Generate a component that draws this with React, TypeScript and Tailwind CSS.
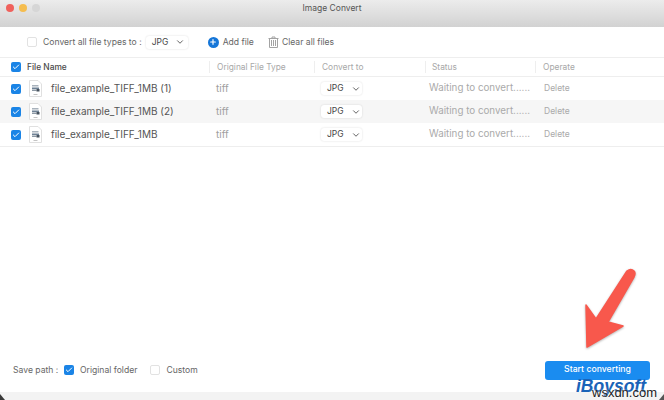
import { ChevronDown, Check, Plus } from 'lucide-react'

const FONT = "font-['Inter','Noto_Sans',sans-serif]"

const FILES = ['file_example_TIFF_1MB (1)', 'file_example_TIFF_1MB (2)', 'file_example_TIFF_1MB']

const CheckBox = ({ checked = false }: { checked?: boolean }) =>
  checked ? (
    <span className="flex h-[10px] w-[10px] shrink-0 items-center justify-center rounded-[2px] bg-[#1a84e6]">
      <Check className="h-[8px] w-[8px] text-white" strokeWidth={3} />
    </span>
  ) : (
    <span className="block h-[10px] w-[10px] shrink-0 rounded-[2px] border border-[#e2e2e2] bg-white" />
  )

const FileIcon = () => (
  <svg width="13" height="17" viewBox="0 0 13 17" className="shrink-0">
    <path d="M.5.5h8.5l3.500 3.500v12.500H.5z" fill="#fff" stroke="#e0e0e0" />
    <rect x="3" y="5" width="6.500" height="1.500" fill="#a8b2bc" />
    <rect x="3" y="7.500" width="7" height="1.500" fill="#6f8295" />
    <rect x="3" y="9.500" width="4.500" height="1.500" fill="#8d99a5" />
    <rect x="7.500" y="9" width="3" height="2.500" fill="#46525e" />
    <rect x="4.500" y="14" width="4" height="1" fill="#c4c4c4" />
  </svg>
)

const TrashIcon = () => (
  <svg width="11" height="12" viewBox="0 0 11 12" fill="none" stroke="#a3a3a3" className="shrink-0">
    <path d="M.5 2.500h10M4 2.500V1h3v1.500M1.500 2.500v9h8v-9M3.500 4v6M5.500 4v6M7.500 4v6" />
  </svg>
)

const TypeSelect = () => (
  <div className="flex h-[13px] w-[41px] items-center justify-between rounded-[3px] bg-white pl-[6px] pr-[1px] text-[8.5px] text-[#444] shadow-[0_0_2px_rgba(0,0,0,0.15)]">
    JPG
    <ChevronDown className="h-[10px] w-[10px] text-[#555]" strokeWidth={2.2} />
  </div>
)

const Row = ({ name, shaded }: { name: string; shaded: boolean }) => (
  <div className={`flex h-[23px] items-center ${shaded ? 'bg-[#f6f6f6]' : 'bg-white'}`}>
    <div className="flex w-[210px] items-center pl-[11px]">
      <CheckBox checked />
      <span className="ml-[8px] flex">
        <FileIcon />
      </span>
      <span className="ml-[9px] whitespace-nowrap text-[10px] text-[#555]">{name}</span>
    </div>
    <div className="w-[105px] pl-[6px] text-[10px] text-[#a0a0a0]">tiff</div>
    <div className="w-[110px] pl-[6px]">
      <TypeSelect />
    </div>
    <div className="w-[111px] whitespace-nowrap pl-[4px] text-[9.800px] text-[#aaaaaa]">Waiting to convert......</div>
    <div className="pl-[8px] text-[8.5px] text-[#aaaaaa]">Delete</div>
  </div>
)

export default function App() {
  return (
    <div className={`relative flex h-[400px] w-[664px] flex-col overflow-hidden bg-white ${FONT}`}>
      <div className="relative flex h-[27px] shrink-0 justify-center bg-gradient-to-b from-[#ececec] to-[#d2d2d2] pt-[2px] text-[8.5px] leading-[13px] text-[#555]">
        <div className="absolute left-[6px] top-[4px] flex gap-[5px]">
          <span className="h-[8px] w-[8px] rounded-full bg-[#f0615c]" />
          <span className="h-[8px] w-[8px] rounded-full bg-[#f5bd4f]" />
          <span className="h-[8px] w-[8px] rounded-full bg-[#d6d6d6]" />
        </div>
        Image Convert
      </div>

      <div className="flex h-[30px] shrink-0 items-center pl-[27px] text-[8.6px] text-[#666]">
        <CheckBox />
        <span className="ml-[6px] whitespace-nowrap">Convert all file types to :</span>
        <div className="ml-[4px] flex h-[13px] w-[42px] items-center justify-between rounded-[3px] bg-white pl-[6px] pr-[3px] text-[8.5px] text-[#444] shadow-[0_0_2px_rgba(0,0,0,0.15)]">
          JPG
          <ChevronDown className="h-[10px] w-[10px] text-[#555]" strokeWidth={2.2} />
        </div>
        <span className="ml-[20px] flex h-[11px] w-[11px] items-center justify-center rounded-full bg-[#1576d8]">
          <Plus className="h-[8px] w-[8px] text-white" strokeWidth={3.5} />
        </span>
        <span className="ml-[4px] whitespace-nowrap">Add file</span>
        <span className="ml-[14px] flex">
          <TrashIcon />
        </span>
        <span className="ml-[3px] whitespace-nowrap">Clear all files</span>
      </div>

      <div className="flex h-[20px] shrink-0 items-center border-y border-[#eeeeee] text-[8.4px] text-[#a8a8a8]">
        <div className="flex w-[210px] items-center border-r border-[#eeeeee] pl-[11px] font-medium text-[#4a4a4a]">
          <CheckBox checked />
          <span className="ml-[6px]">File Name</span>
        </div>
        <div className="w-[105px] border-r border-[#eeeeee] pl-[7px]">Original File Type</div>
        <div className="w-[111px] border-r border-[#eeeeee] pl-[7px]">Convert to</div>
        <div className="w-[110px] border-r border-[#eeeeee] pl-[6px]">Status</div>
        <div className="pl-[7px]">Operate</div>
      </div>

      <div className="shrink-0 border-b border-[#eeeeee]">
        {FILES.map((name, i) => (
          <Row key={name} name={name} shaded={i === 1} />
        ))}
      </div>

      <div className="flex-1" />

      <div className="flex h-[26px] shrink-0 items-center justify-between pl-[13px] pr-[14px] text-[8.6px] text-[#666]">
        <div className="flex items-center">
          <span className="w-[51px] whitespace-nowrap">Save path :</span>
          <CheckBox checked />
          <span className="ml-[6px]">Original folder</span>
          <span className="ml-[13px] flex">
            <CheckBox />
          </span>
          <span className="ml-[6px]">Custom</span>
        </div>
        <div className="flex h-[19px] w-[105px] items-center justify-center rounded-[3px] bg-[#1a8cf0] text-[8.7px] font-medium text-white">
          Start converting
        </div>
      </div>
      <div className="h-[9px] shrink-0" />
      <div className="h-[8px] shrink-0 bg-[#f3f3f3]" />

      {/* red arrow drawn over the page */}
      <svg className="absolute left-[575px] top-[262px] drop-shadow-[0_1px_1px_rgba(0,0,0,0.3)]" width="70" height="92" viewBox="0 0 70 92">
        <path d="M52 9 Q56 6 59 9 Q61 11 59 15 L33 60 L48 64 L12 85 L11 43 L21 57 Z" fill="#f8584c" stroke="#f8584c" strokeWidth="1.500" strokeLinejoin="round" />
      </svg>

      {/* dark desktop showing past the window's rounded bottom corners */}
      <svg className="absolute bottom-0 left-0" width="6" height="6" viewBox="0 0 6 6">
        <path d="M0 0 L5 6 H0 Z" fill="#3a3a3a" />
      </svg>
      <svg className="absolute bottom-0 right-0" width="5" height="6" viewBox="0 0 5 6">
        <path d="M5 0 L0 6 H5 Z" fill="#555" />
      </svg>

      {/* watermark */}
      <span className="absolute left-[576px] top-[378px] font-['Liberation_Sans',sans-serif] text-[17.500px] font-bold italic leading-none text-[#1a63b8]">iBoysoft</span>
      <span className="absolute left-[592px] top-[386px] font-['Liberation_Sans',sans-serif] text-[13px] leading-none text-[#222] [text-shadow:0_0_2px_#fff]">wsxdn.com</span>
    </div>
  )
}
